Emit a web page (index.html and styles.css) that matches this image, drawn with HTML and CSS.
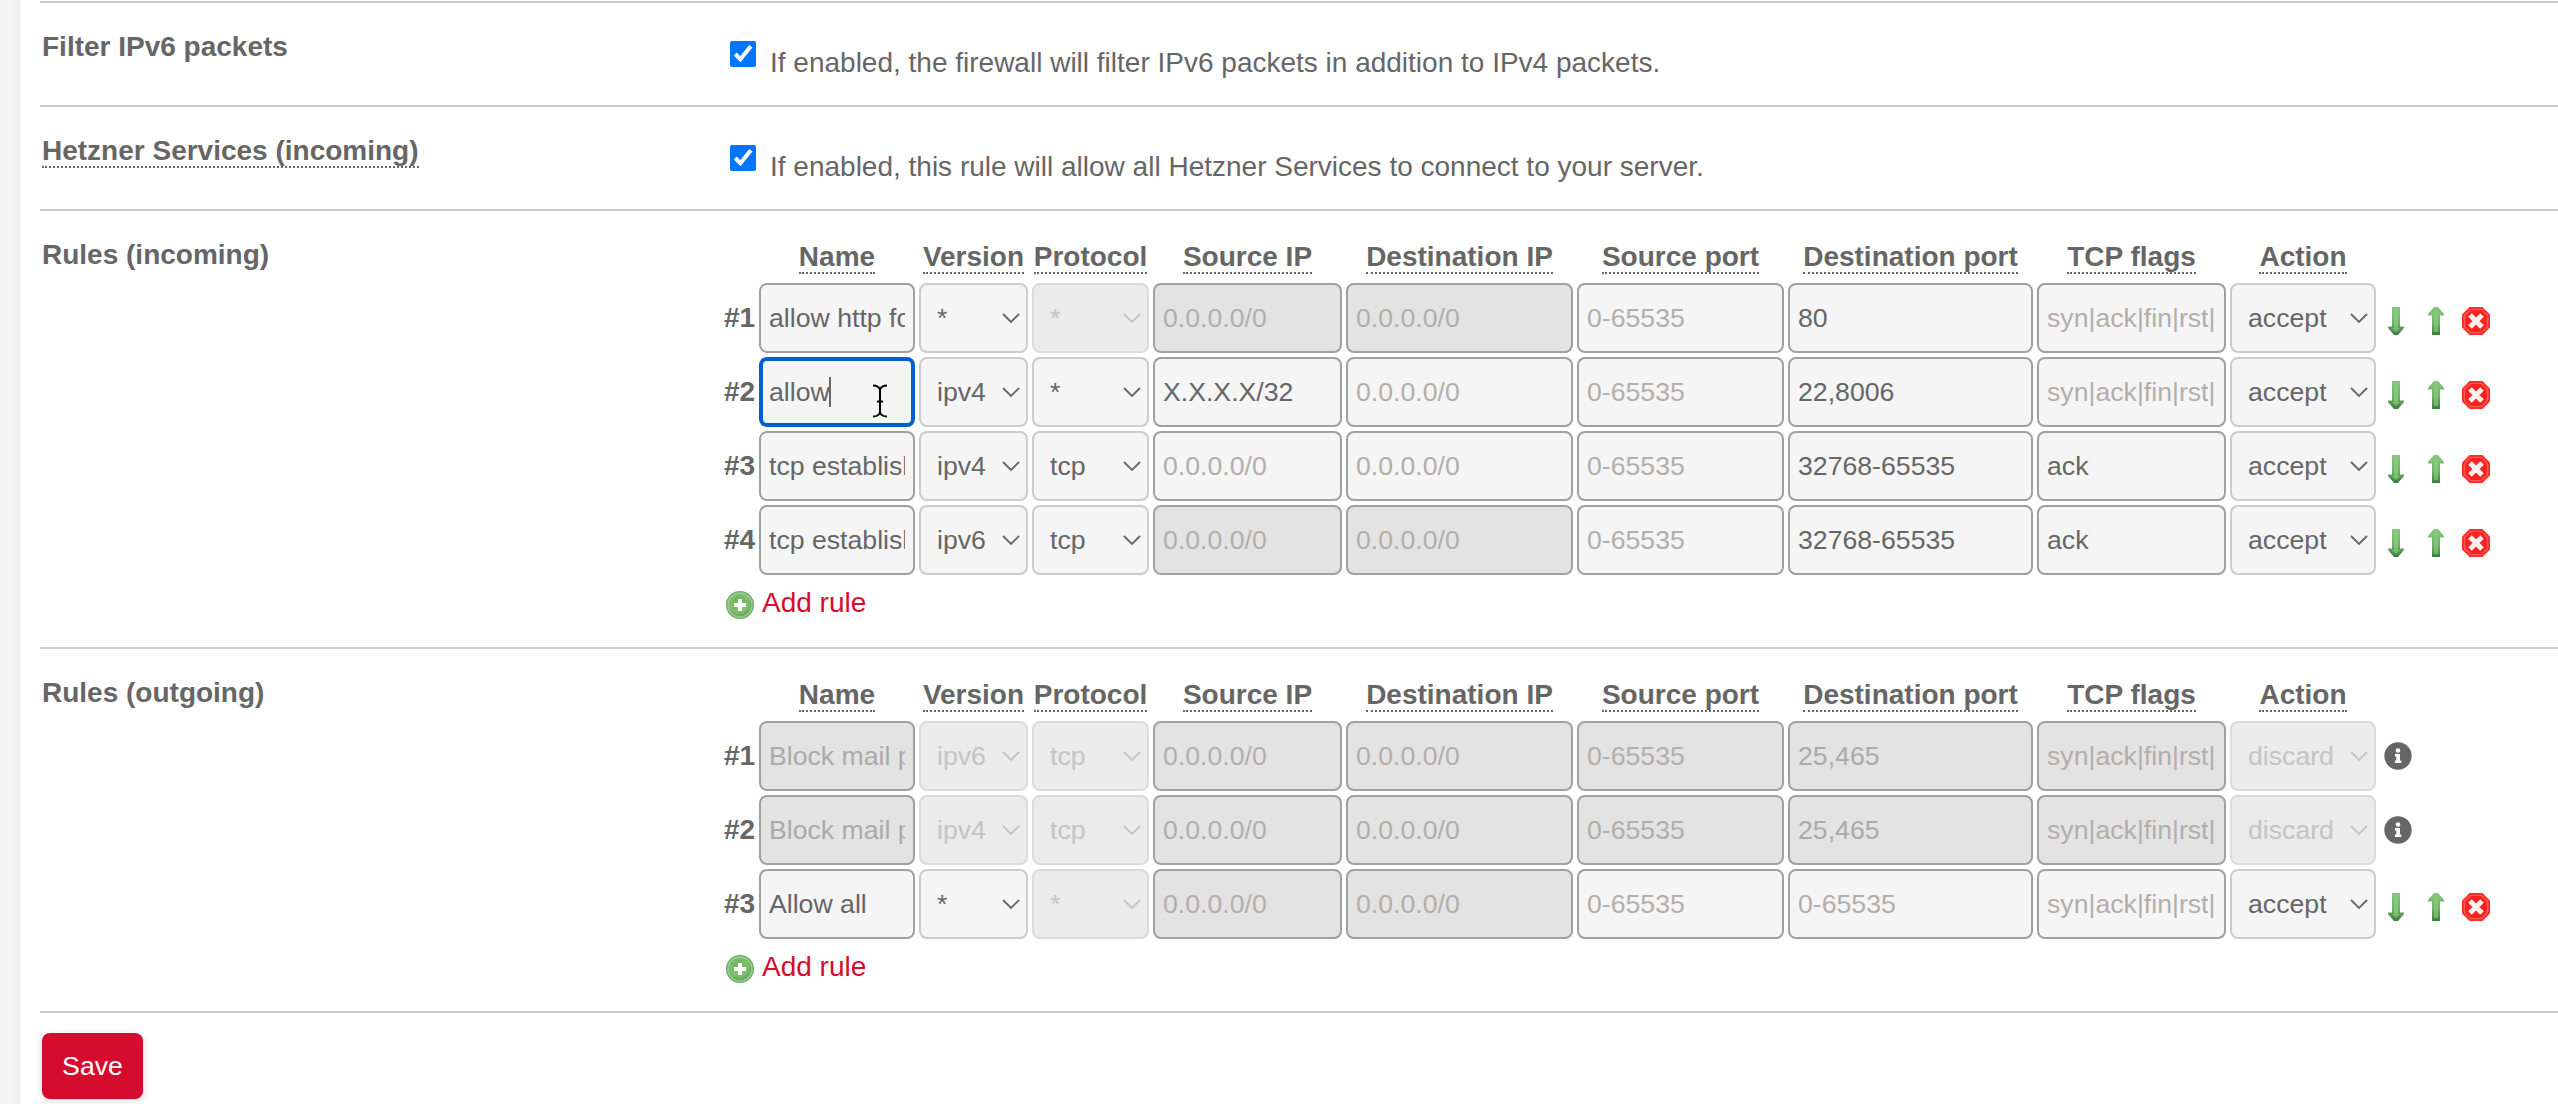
FILE: index.html
```html
<!DOCTYPE html>
<html lang="en">
<head>
    <meta charset="UTF-8">
    <meta name="viewport" content="width=device-width, initial-scale=1.0">
    <title>Firewall</title>
    <link rel="stylesheet" href="styles.css">
</head>
<body>
    <!-- Icons -->
    <svg class="icon-defs" width="0" height="0">
        <defs>
            <linearGradient id="green" x1="0" y1="0" x2="0" y2="1">
                <stop offset="0" stop-color="#86c77e"/>
                <stop offset="0.6" stop-color="#6bb064"/>
                <stop offset="1" stop-color="#3a7d3e"/>
            </linearGradient>
            <radialGradient id="ball" cx="0.45" cy="0.4" r="0.6">
                <stop offset="0" stop-color="#62b04f"/>
                <stop offset="0.65" stop-color="#7fc170"/>
                <stop offset="1" stop-color="#5f9f5a"/>
            </radialGradient>
            <symbol id="down" viewBox="0 0 32 32">
                <path d="M12 2h8v19.500h4v1.500l-6 7h-4l-6-7v-1.500h4z" fill="url(#green)"/>
                <path d="M14 4h4v19h2l-4 4-4-4h2z" fill="#8ed184" opacity="0.65"/>
            </symbol>
            <symbol id="up" viewBox="0 0 32 32">
                <path d="M14 2h4l6 7v1.500h-4V30h-8V10.500H8V9z" fill="url(#green)"/>
                <path d="M16 4l4 4.500h-2V27h-4V8.500h-2z" fill="#8ed184" opacity="0.55"/>
            </symbol>
            <symbol id="remove" viewBox="0 0 32 32">
                <path d="M9.500 2h13l7.500 7.500v13L22.500 30h-13L2 22.500v-13z" fill="#fd302c"/>
                <path d="M10.500 4.500h11l6 6v11l-6 6h-11l-6-6v-11z" fill="#fa2321" stroke="#ff5d57" stroke-width="1.200"/>
                <path d="M10 10l12 12M22 10L10 22" stroke="#fff1f0" stroke-width="5"/>
            </symbol>
            <symbol id="add" viewBox="0 0 28 28">
                <circle cx="14" cy="14" r="14" fill="#6ba866"/>
                <circle cx="14" cy="14" r="12" fill="url(#ball)" stroke="#9bd08f" stroke-width="1.500"/>
                <path d="M14 8v12M8 14h12" stroke="#fff" stroke-width="4.200"/>
            </symbol>
            <symbol id="info" viewBox="0 0 28 28">
                <circle cx="14" cy="14" r="13.700" fill="#666"/>
                <circle cx="14" cy="8.500" r="2.300" fill="#fff"/>
                <path d="M11 12h5v6.500h1.300v2.500h-6.300v-2.500h1.300v-4h-1.300z" fill="#fff"/>
            </symbol>
        </defs>
    </svg>

    <div class="panel">
        <div class="section">
            <div class="section-label">Filter IPv6 packets</div>
            <div class="check-row">
                <input type="checkbox" class="check" checked>
                <span>If enabled, the firewall will filter IPv6 packets in addition to IPv4 packets.</span>
            </div>
        </div>

        <div class="section">
            <div class="section-label"><span class="hint">Hetzner Services (incoming)</span></div>
            <div class="check-row">
                <input type="checkbox" class="check" checked>
                <span>If enabled, this rule will allow all Hetzner Services to connect to your server.</span>
            </div>
        </div>

        <!-- Incoming rules -->
        <div class="section section-incoming">
            <div class="section-label">Rules (incoming)</div>
            <div class="rules">
                <div class="rule rule-head">
                    <span></span>
                    <span><span class="hint">Name</span></span>
                    <span><span class="hint">Version</span></span>
                    <span><span class="hint">Protocol</span></span>
                    <span><span class="hint">Source IP</span></span>
                    <span><span class="hint">Destination IP</span></span>
                    <span><span class="hint">Source port</span></span>
                    <span><span class="hint">Destination port</span></span>
                    <span><span class="hint">TCP flags</span></span>
                    <span><span class="hint">Action</span></span>
                </div>
                <div class="rule">
                    <span class="num">#1</span>
                    <input type="text" value="allow http for all">
                    <select><option>*</option></select>
                    <select disabled><option>*</option></select>
                    <input type="text" placeholder="0.0.0.0/0" disabled>
                    <input type="text" placeholder="0.0.0.0/0" disabled>
                    <input type="text" placeholder="0-65535">
                    <input type="text" value="80">
                    <input type="text" placeholder="syn|ack|fin|rst|psh|urg">
                    <select><option>accept</option></select>
                    <div class="tools">
                        <svg><use href="#down"/></svg><svg><use href="#up"/></svg><svg><use href="#remove"/></svg>
                    </div>
                </div>
                <div class="rule">
                    <span class="num">#2</span>
                    <div class="name-active">
                        <input type="text" class="active" value="allow">
                        <span class="caret"></span>
                        <svg class="pointer" viewBox="0 0 16 34">
                            <path d="M1 1.500c4 0 6 1.500 7 4 1-2.500 3-4 7-4M8 5v24M1 32.500c4 0 6-1.500 7-4 1 2.500 3 4 7 4M5 17.500h6" fill="none" stroke="#000" stroke-width="2"/>
                        </svg>
                    </div>
                    <select><option>ipv4</option></select>
                    <select><option>*</option></select>
                    <input type="text" value="X.X.X.X/32">
                    <input type="text" placeholder="0.0.0.0/0">
                    <input type="text" placeholder="0-65535">
                    <input type="text" value="22,8006">
                    <input type="text" placeholder="syn|ack|fin|rst|psh|urg">
                    <select><option>accept</option></select>
                    <div class="tools">
                        <svg><use href="#down"/></svg><svg><use href="#up"/></svg><svg><use href="#remove"/></svg>
                    </div>
                </div>
                <div class="rule">
                    <span class="num">#3</span>
                    <input type="text" value="tcp established">
                    <select><option>ipv4</option></select>
                    <select><option>tcp</option></select>
                    <input type="text" placeholder="0.0.0.0/0">
                    <input type="text" placeholder="0.0.0.0/0">
                    <input type="text" placeholder="0-65535">
                    <input type="text" value="32768-65535">
                    <input type="text" value="ack">
                    <select><option>accept</option></select>
                    <div class="tools">
                        <svg><use href="#down"/></svg><svg><use href="#up"/></svg><svg><use href="#remove"/></svg>
                    </div>
                </div>
                <div class="rule">
                    <span class="num">#4</span>
                    <input type="text" value="tcp established">
                    <select><option>ipv6</option></select>
                    <select><option>tcp</option></select>
                    <input type="text" placeholder="0.0.0.0/0" disabled>
                    <input type="text" placeholder="0.0.0.0/0" disabled>
                    <input type="text" placeholder="0-65535">
                    <input type="text" value="32768-65535">
                    <input type="text" value="ack">
                    <select><option>accept</option></select>
                    <div class="tools">
                        <svg><use href="#down"/></svg><svg><use href="#up"/></svg><svg><use href="#remove"/></svg>
                    </div>
                </div>
                <a href="#" class="add-rule"><svg><use href="#add"/></svg><span>Add rule</span></a>
            </div>
        </div>

        <!-- Outgoing rules -->
        <div class="section section-outgoing">
            <div class="section-label">Rules (outgoing)</div>
            <div class="rules">
                <div class="rule rule-head">
                    <span></span>
                    <span><span class="hint">Name</span></span>
                    <span><span class="hint">Version</span></span>
                    <span><span class="hint">Protocol</span></span>
                    <span><span class="hint">Source IP</span></span>
                    <span><span class="hint">Destination IP</span></span>
                    <span><span class="hint">Source port</span></span>
                    <span><span class="hint">Destination port</span></span>
                    <span><span class="hint">TCP flags</span></span>
                    <span><span class="hint">Action</span></span>
                </div>
                <div class="rule">
                    <span class="num">#1</span>
                    <input type="text" value="Block mail ports" disabled>
                    <select disabled><option>ipv6</option></select>
                    <select disabled><option>tcp</option></select>
                    <input type="text" placeholder="0.0.0.0/0" disabled>
                    <input type="text" placeholder="0.0.0.0/0" disabled>
                    <input type="text" placeholder="0-65535" disabled>
                    <input type="text" value="25,465" disabled>
                    <input type="text" placeholder="syn|ack|fin|rst|psh|urg" disabled>
                    <select disabled><option>discard</option></select>
                    <svg class="info"><use href="#info"/></svg>
                </div>
                <div class="rule">
                    <span class="num">#2</span>
                    <input type="text" value="Block mail ports" disabled>
                    <select disabled><option>ipv4</option></select>
                    <select disabled><option>tcp</option></select>
                    <input type="text" placeholder="0.0.0.0/0" disabled>
                    <input type="text" placeholder="0.0.0.0/0" disabled>
                    <input type="text" placeholder="0-65535" disabled>
                    <input type="text" value="25,465" disabled>
                    <input type="text" placeholder="syn|ack|fin|rst|psh|urg" disabled>
                    <select disabled><option>discard</option></select>
                    <svg class="info"><use href="#info"/></svg>
                </div>
                <div class="rule">
                    <span class="num">#3</span>
                    <input type="text" value="Allow all">
                    <select><option>*</option></select>
                    <select disabled><option>*</option></select>
                    <input type="text" placeholder="0.0.0.0/0" disabled>
                    <input type="text" placeholder="0.0.0.0/0" disabled>
                    <input type="text" placeholder="0-65535">
                    <input type="text" placeholder="0-65535">
                    <input type="text" placeholder="syn|ack|fin|rst|psh|urg">
                    <select><option>accept</option></select>
                    <div class="tools">
                        <svg><use href="#down"/></svg><svg><use href="#up"/></svg><svg><use href="#remove"/></svg>
                    </div>
                </div>
                <a href="#" class="add-rule"><svg><use href="#add"/></svg><span>Add rule</span></a>
            </div>
        </div>

        <div class="footer">
            <button class="save">Save</button>
        </div>
    </div>
</body>
</html>
```

FILE: styles.css
```css
* { box-sizing: border-box; }
body {
    margin: 0;
    height: 1104px;
    overflow: hidden;
    padding-left: 20px;
    background-color: #f4f4f4;
    color: #666;
    font-family: "Liberation Sans", Arial, sans-serif;
    font-size: 28px;
    line-height: 32px;
}
.icon-defs { position: absolute; }

.panel {
    height: 1104px;
    padding: 1px 0 0 20px;
    background-color: #fff;
    box-shadow: 0 0 8px rgba(0, 0, 0, 0.08);
}
.section {
    display: grid;
    grid-template-columns: 682px 1fr;
    height: 104px;
    border-top: 2px solid #ccc;
}
.section-incoming { height: 438px; }
.section-outgoing { height: 364px; }
.section-label {
    padding: 27px 0 0 2px;
    font-weight: bold;
    line-height: 34px;
}
.hint {
    display: inline-block;
    height: 34px;
    line-height: 34px;
    vertical-align: top;
    border-bottom: 2px dotted #666;
}

.check-row {
    display: flex;
    align-items: flex-start;
    gap: 14px;
    padding: 38px 0 0 8px;
}
.check-row span { margin-top: 6px; }
.check {
    width: 26px;
    height: 26px;
    margin: 0;
    accent-color: #0075ff;
}

/* Rule table */
.rules {
    display: flex;
    flex-direction: column;
    gap: 4px;
    padding-top: 29px;
}
.rule {
    display: grid;
    grid-template-columns: 33px 156px 109px 117px 189px 227px 207px 245px 189px 146px 150px;
    gap: 4px;
    height: 70px;
    align-items: center;
}
.rule-head {
    height: 39px;
    align-items: start;
    font-weight: bold;
    text-align: center;
    white-space: nowrap;
}
.num {
    padding-left: 2px;
    font-weight: bold;
}
.rule input, .rule select {
    width: 100%;
    min-width: 0;
    height: 70px;
    margin: 0;
    border: 2px solid #a0a0a0;
    border-radius: 8px;
    background-color: #f5f5f5;
    color: #666;
    font-family: inherit;
    font-size: 26.67px;
    padding: 0 8px;
}
.rule input::placeholder { color: #b3aeab; }
.rule input:disabled {
    background-color: #e3e3e3;
    color: #aaa;
}
.rule select {
    appearance: none;
    padding: 0 0 0 16px;
    border-color: #ccc;
    background-image: url("data:image/svg+xml,%3Csvg xmlns='http://www.w3.org/2000/svg' width='18' height='11'%3E%3Cpath d='M1 1l8 8 8-8' fill='none' stroke='%23666' stroke-width='1.8'/%3E%3C/svg%3E");
    background-repeat: no-repeat;
    background-position: right 6px center;
}
.rule select:disabled {
    opacity: 1;
    border-color: #dbdbdb;
    background-color: #ebebeb;
    color: #c4c4c4;
    background-image: url("data:image/svg+xml,%3Csvg xmlns='http://www.w3.org/2000/svg' width='18' height='11'%3E%3Cpath d='M1 1l8 8 8-8' fill='none' stroke='%23c4c4c4' stroke-width='1.8'/%3E%3C/svg%3E");
}

.name-active { position: relative; }
.rule input.active {
    display: block;
    border: 4px solid #005fd1;
    padding: 0 6px;
}
.caret {
    position: absolute;
    left: 70px;
    top: 20px;
    width: 2px;
    height: 30px;
    background-color: #666;
}
.pointer {
    position: absolute;
    left: 113px;
    top: 27px;
    width: 16px;
    height: 34px;
}

.tools {
    display: flex;
    gap: 8px;
    padding-top: 6px;
}
.tools svg { width: 32px; height: 32px; }
.info {
    width: 28px;
    height: 28px;
    margin-left: 4px;
}

.add-rule {
    display: flex;
    gap: 8px;
    margin-top: 12px;
    padding-left: 4px;
    color: #d50c2d;
    text-decoration: none;
}
.add-rule svg { width: 28px; height: 28px; }
.add-rule span { margin-top: -4px; }

.footer {
    border-top: 2px solid #ccc;
    padding: 20px 0 0 2px;
}
.save {
    display: block;
    width: 101px;
    height: 66px;
    padding: 0;
    border: none;
    border-radius: 8px;
    background-color: #d50c2d;
    color: #fff;
    font-family: inherit;
    font-size: 26.67px;
    box-shadow: 0 2px 8px rgba(0, 0, 0, 0.15);
}
```
